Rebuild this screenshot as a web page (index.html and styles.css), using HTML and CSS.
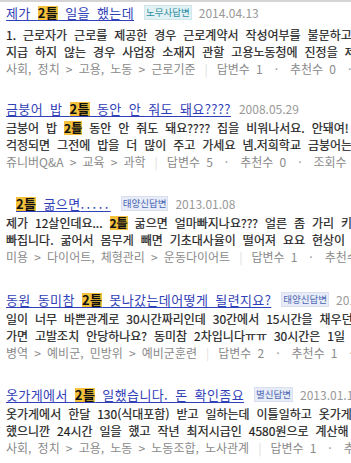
FILE: index.html
```html
<!DOCTYPE html>
<html lang="ko">
<head>
<meta charset="utf-8">
<title>지식iN 검색결과</title>
<link rel="stylesheet" href="styles.css">
</head>
<body>
<div class="list">
  <div class="item item-first">
    <div class="title-row">
      <a class="title" href="#">제가 <em class="hl">2틀</em> 일을 했는데</a>
      <span class="badge badge-teal">노무사답변</span>
      <span class="date">2014.04.13</span>
    </div>
    <p class="desc">1. 근로자가 근로를 제공한 경우 근로계약서 작성여부를 불문하고</p>
    <p class="desc">지급 하지 않는 경우 사업장 소재지 관할 고용노동청에 진정을 제기</p>
    <div class="meta">사회, 정치 &gt; 고용, 노동 &gt; 근로기준<span class="bar">|</span>답변수 1<span class="dot">·</span>추천수 0<span class="dot">·</span>조회수 12</div>
  </div>

  <div class="item">
    <div class="title-row">
      <a class="title" href="#">금붕어 밥 <em class="hl">2틀</em> 동안 안 줘도 돼요????</a>
      <span class="date date-gap">2008.05.29</span>
    </div>
    <p class="desc">금붕어 밥 <em class="hl">2틀</em> 동안 안 줘도 돼요???? 집을 비워나서요. 안돼여!</p>
    <p class="desc">걱정되면 그전에 밥을 더 많이 주고 가세요 넴.저희학교 금붕어는</p>
    <div class="meta">쥬니버Q&amp;A &gt; 교육 &gt; 과학<span class="bar">|</span>답변수 5<span class="dot">·</span>추천수 0<span class="dot">·</span>조회수 3</div>
  </div>

  <div class="item">
    <div class="title-row indent">
      <a class="title" href="#"><em class="hl">2틀</em> 굶으면<span class="ell">.....</span></a>
      <span class="badge badge-blue">태양신답변</span>
      <span class="date">2013.01.08</span>
    </div>
    <p class="desc">제가 12살인데요... <em class="hl">2틀</em> 굶으면 얼마빠지나요??? 얼른 좀 가리 키</p>
    <p class="desc">빠집니다. 굶어서 몸무게 빼면 기초대사율이 떨어져 요요 현상이</p>
    <div class="meta">미용 &gt; 다이어트, 체형관리 &gt; 운동다이어트<span class="bar">|</span>답변수 1<span class="dot">·</span>추천수 0</div>
  </div>

  <div class="item">
    <div class="title-row">
      <a class="title" href="#">동원 동미참 <em class="hl">2틀</em> 못나갔는데어떻게 될련지요?</a>
      <span class="badge badge-blue">태양신답변</span>
      <span class="date">2012.06.20</span>
    </div>
    <p class="desc">일이 너무 바쁜관계로 30시간짜리인데 30간에서 15시간을 채우던</p>
    <p class="desc">가면 고발조치 안당하나요? 동미참 2차입니다ㅠㅠ 30시간은 1일</p>
    <div class="meta">병역 &gt; 예비군, 민방위 &gt; 예비군훈련<span class="bar">|</span>답변수 2<span class="dot">·</span>추천수 1<span class="dot">·</span>조회수 8</div>
  </div>

  <div class="item">
    <div class="title-row">
      <a class="title" href="#">옷가게에서 <em class="hl">2틀</em> 일했습니다. 돈 확인좀요</a>
      <span class="badge badge-blue">별신답변</span>
      <span class="date">2013.01.15</span>
    </div>
    <p class="desc">옷가게에서 한달 130(식대포함) 받고 일하는데 이틀일하고 옷가게</p>
    <p class="desc">했으니깐 24시간 일을 했고 작년 최저시급인 4580원으로 계산해</p>
    <div class="meta">사회, 정치 &gt; 고용, 노동 &gt; 노동조합, 노사관계<span class="bar">|</span>답변수 1<span class="dot">·</span>추천수 0</div>
  </div>
</div>
</body>
</html>
```

FILE: styles.css
```css
html, body {
  margin: 0;
  padding: 0;
  background: #ffffff;
}

body {
  font-family: "Noto Sans CJK KR", "Noto Sans", sans-serif;
  overflow: hidden;
}

.list {
  border-top: 2px solid #d4d4d4;
  padding-top: 1px;
}

.item {
  padding: 0 0 23.5px 6px;
}

.item-first {
  padding-bottom: 20.5px;
}

.item-first .title-row {
  margin-bottom: 4px;
}

.title-row {
  display: flex;
  align-items: center;
  height: 19px;
  margin-bottom: 1px;
  white-space: nowrap;
  overflow: hidden;
}

.title-row.indent {
  padding-left: 10px;
}

.title {
  flex-shrink: 0;
  font-size: 13px;
  line-height: 19px;
  color: #3040b8;
  text-decoration: underline;
  text-underline-offset: 2px;
  word-spacing: 3px;
  letter-spacing: 0.4px;
}

.ell {
  letter-spacing: 2.4px;
}

.hl {
  font-style: normal;
  font-weight: bold;
  color: #111111;
  background: linear-gradient(to bottom, transparent 14%, #f4c23a 14%, #f4c23a 92%, transparent 92%);
}

.badge {
  flex-shrink: 0;
  margin-left: 10px;
  padding: 0 1px;
  font-size: 9.5px;
  line-height: 13px;
  border: 1px solid;
}

.badge-teal {
  background: #e1f1f4;
  color: #2f8fa3;
  border-color: #cfe6ec;
}

.badge-blue {
  background: #e7ecf7;
  color: #4d68b5;
  border-color: #d8dff0;
}

.date {
  flex-shrink: 0;
  margin-left: 7px;
  font-size: 12px;
  color: #999999;
}

.date-gap {
  margin-left: 8px;
}

.desc {
  margin: 0;
  font-size: 12px;
  line-height: 17px;
  color: #1e1e1e;
  -webkit-text-stroke: 0.2px #1e1e1e;
  white-space: nowrap;
  overflow: hidden;
  word-spacing: 3.6px;
}

.meta {
  font-size: 12px;
  line-height: 18px;
  color: #8a8a8a;
  white-space: nowrap;
  overflow: hidden;
  word-spacing: 2.8px;
}

.bar {
  margin: 0 9px;
  color: #dddddd;
}

.dot {
  margin: 0 12px;
  color: #999999;
}
```
